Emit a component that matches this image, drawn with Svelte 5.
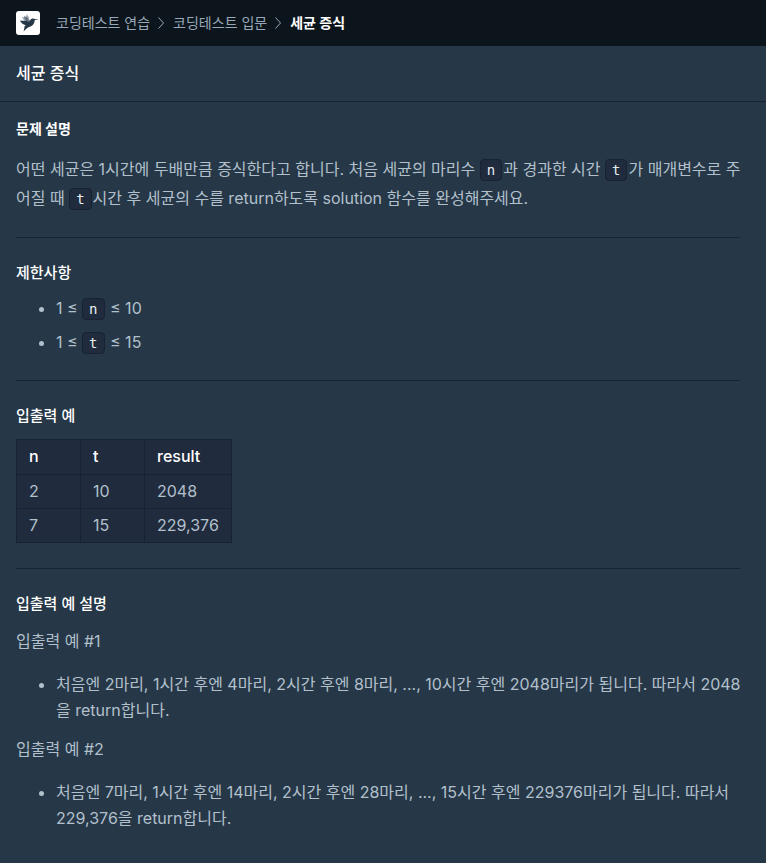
<script lang="ts">
  type Example = { n: string; t: string; result: string }

  const crumbs = ['코딩테스트 연습', '코딩테스트 입문']
  const title = '세균 증식'

  const limits = [
    { name: 'n', max: 10 },
    { name: 't', max: 15 },
  ]

  const examples: Example[] = [
    { n: '2', t: '10', result: '2048' },
    { n: '7', t: '15', result: '229,376' },
  ]

  const notes = [
    '처음엔 2마리, 1시간 후엔 4마리, 2시간 후엔 8마리, ..., 10시간 후엔 2048마리가 됩니다. 따라서 2048을 return합니다.',
    '처음엔 7마리, 1시간 후엔 14마리, 2시간 후엔 28마리, ..., 15시간 후엔 229376마리가 됩니다. 따라서 229,376을 return합니다.',
  ]
</script>

<div class="page">
  <header class="topbar">
    <a class="logo" href="/" aria-label="홈">
      <svg viewBox="0 0 24 24" width="24" height="24" aria-hidden="true">
        <rect width="24" height="24" rx="3" fill="#fff" />
        <path d="M5.500 6 8 6.600 7.800 4.400l2.400 1.400L10.600 3l2.200 3 .8 4.200-4.600.2Z" fill="#a3abb5" />
        <path d="m8 6.600 2.600-.8 3.200 4.400-3.400.4Z" fill="#66717f" />
        <path d="M4 9.600c2.600.2 5.600.3 8.800.9 1.200-.6 1.800-2.500 3.500-3 1-.3 1.800.1 2.500.6l3.900.1-3.900.9c-.3 1.800-.8 4.200-2.500 5.500-1.600 1.300-3.600 1.500-5 2.400-1.200.8-2.400 2.100-3.700 3.400l.9-4.300c-.2-.7.4-1.300 1.200-1.800C7 13.600 4.900 12.200 4 9.600Z" fill="#263747" />
      </svg>
    </a>
    <nav aria-label="breadcrumb">
      <ol class="crumbs">
        {#each crumbs as crumb}
          <li>
            <a href="/learn">{crumb}</a>
            <svg class="chevron" viewBox="0 0 8 14" width="8" height="14" aria-hidden="true">
              <path d="M1.500 1.500 6.500 7l-5 5.500" fill="none" stroke="currentColor" />
            </svg>
          </li>
        {/each}
        <li class="current" aria-current="page">{title}</li>
      </ol>
    </nav>
  </header>

  <h1 class="title">{title}</h1>

  <main class="guide">
    <h2 class="label">문제 설명</h2>
    <p class="description">
      어떤 세균은 1시간에 두배만큼 증식한다고 합니다. 처음 세균의 마리수 <code>n</code>과 경과한 시간 <code>t</code>가 매개변수로 주어질 때 <code>t</code>시간 후 세균의 수를 return하도록 solution 함수를 완성해주세요.
    </p>

    <hr />

    <h3>제한사항</h3>
    <ul class="limits">
      {#each limits as limit}
        <li>1 ≤ <code>{limit.name}</code> ≤ {limit.max}</li>
      {/each}
    </ul>

    <hr />

    <h3>입출력 예</h3>
    <table>
      <thead>
        <tr><th>n</th><th>t</th><th>result</th></tr>
      </thead>
      <tbody>
        {#each examples as row}
          <tr><td>{row.n}</td><td>{row.t}</td><td>{row.result}</td></tr>
        {/each}
      </tbody>
    </table>

    <hr />

    <h3>입출력 예 설명</h3>
    {#each notes as note, i}
      <p class="note-title">입출력 예 #{i + 1}</p>
      <ul class="note">
        <li>{note}</li>
      </ul>
    {/each}
  </main>
</div>

<style>
  :global(body) { margin: 0; background: #263747; }
  .page { min-height: 100vh; background: #263747; color: #b2c0cc; font-family: Inter, 'Noto Sans CJK KR', sans-serif; font-size: 16px; line-height: 26px; }

  .topbar { display: flex; align-items: center; gap: 16px; height: 46px; padding: 0 16px; background: #0c151c; }
  .logo { display: flex; }
  .crumbs { display: flex; margin: 0; padding: 0; list-style: none; font-size: 14px; line-height: 20px; }
  .crumbs li { display: flex; align-items: center; }
  .crumbs a { color: #98a8b9; text-decoration: none; }
  .chevron { margin: 0 8px 0 7px; color: #98a8b9; }
  .crumbs .current { color: #fff; font-weight: 700; }

  .title { margin: 0; padding: 14px 16px 15px; border-bottom: 1px solid #172334; color: #fff; font-size: 16px; font-weight: 500; }

  .guide { padding: 16px 20px 24px 16px; }
  .label { margin: 0 0 15px; color: #fff; font-size: 14px; font-weight: 700; line-height: 22px; }
  h3 { margin: 0; color: #fff; font-size: 15px; font-weight: 500; line-height: 24px; }
  hr { height: 1px; margin: 24px 6px 23px 0; border: 0; background: #172334; }

  .description { margin: 0; line-height: 29px; }
  code { display: inline-block; box-sizing: border-box; height: 22px; margin-right: 1px; padding: 0 6px; border: 1px solid #172334; border-radius: 4px; background: #202b3d; color: #e6ebf0; font-family: 'DejaVu Sans Mono', monospace; font-size: 14px; line-height: 20px; }

  ul { margin: 0; padding-left: 40px; }
  .limits { margin: 10px 0 25px; }
  .limits li + li { margin-top: 8px; }

  table { margin: 11px 0 25px; border-collapse: collapse; background: #202b3d; line-height: 23px; }
  th, td { min-width: 39px; padding: 5px 12px; border: 1px solid #172334; text-align: left; }
  th { padding-bottom: 6px; color: #fff; font-weight: 500; }

  .note-title { margin: 12px 0 17px; }
  .note { margin-bottom: 13px; }
</style>
